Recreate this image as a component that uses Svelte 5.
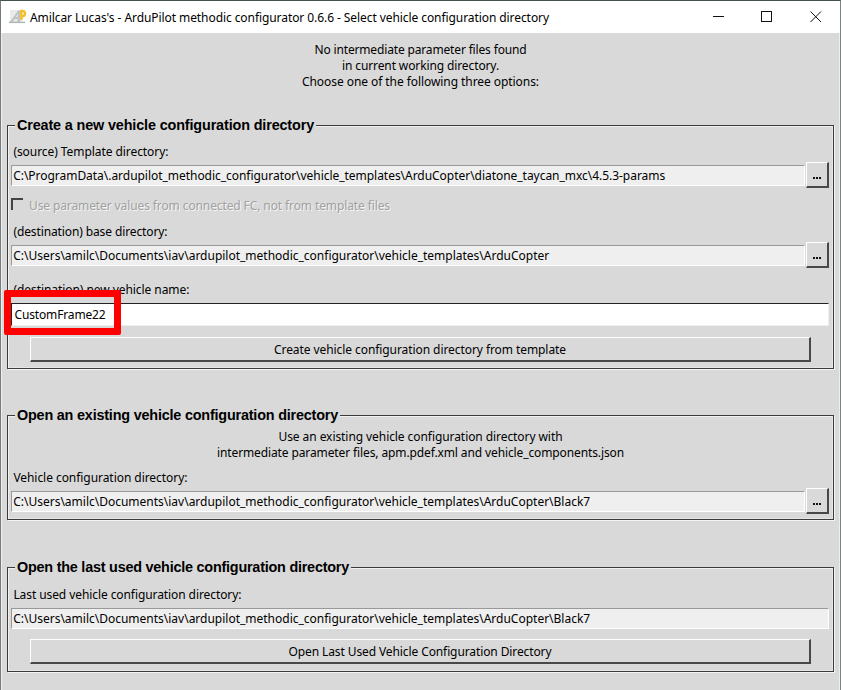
<script>
  const base = 'C:\\Users\\amilc\\Documents\\iav\\ardupilot_methodic_configurator\\vehicle_templates\\ArduCopter';
  const template = 'C:\\ProgramData\\.ardupilot_methodic_configurator\\vehicle_templates\\ArduCopter\\diatone_taycan_mxc\\4.5.3-params';
  let name = $state('CustomFrame22');

  // Spreads the letters of a line so that it takes the given width.
  function fit(node, width) {
    const spacing = (width - node.getBoundingClientRect().width) / node.textContent.length;
    node.style.letterSpacing = `${spacing}px`;
  }
</script>

{#snippet pathRow(value, width)}
  <div class="row">
    <div class="field"><span use:fit={width}>{value}</span></div>
    <button class="browse" aria-label="Browse"><i></i><i></i><i></i></button>
  </div>
{/snippet}

<div class="window">
  <header>
    <svg class="logo" width="18" height="16" viewBox="0 0 18 16">
      <rect x="1" y="1" width="12" height="12" fill="#e9ebeb" />
      <path d="M1 13 L9 1.5 H11 V13 H8.5 V10 H5.5 L3.8 13 Z M7 8 H8.8 V5 Z" fill="#bfc3c4" fill-rule="evenodd" />
      <path d="M0 13.4 H16" stroke="#b0b3b4" stroke-width="1.4" />
      <path d="M12.3 11 V2 H13.5 Q16.2 2 16 4.8 Q15.5 7.8 12.5 7.6" fill="none" stroke="#f5be2b" stroke-width="2.4" />
    </svg>
    <h1><span use:fit={519}>Amilcar Lucas's - ArduPilot methodic configurator 0.6.6 - Select vehicle configuration directory</span></h1>
    <svg class="controls" width="112" height="14" viewBox="0 0 112 14" fill="none" stroke="#111">
      <path d="M1 6.5 H12" />
      <rect x="49.5" y="1.5" width="10" height="10" />
      <path d="M98.5 1.5 L109 12 M109 1.5 L98.5 12" />
    </svg>
  </header>

  <main>
    <p class="intro">
      <span use:fit={212}>No intermediate parameter files found</span><br />
      <span use:fit={157}>in current working directory.</span><br />
      <span use:fit={237}>Choose one of the following three options:</span>
    </p>

    <section class="create">
      <h2><span use:fit={297}>Create a new vehicle configuration directory</span></h2>
      <div class="label"><span use:fit={155}>(source) Template directory:</span></div>
      {@render pathRow(template, 652)}
      <div class="check"><b></b><span use:fit={361}>Use parameter values from connected FC, not from template files</span></div>
      <div class="label"><span use:fit={154}>(destination) base directory:</span></div>
      {@render pathRow(base, 536)}
      <div class="label named"><span use:fit={176}>(destination) new vehicle name:</span></div>
      <div class="entry"><span use:fit={91}>{name}</span><div class="marker"></div></div>
      <button class="wide"><span use:fit={292}>Create vehicle configuration directory from template</span></button>
    </section>

    <section class="existing">
      <h2><span use:fit={321}>Open an existing vehicle configuration directory</span></h2>
      <p>
        <span use:fit={284}>Use an existing vehicle configuration directory with</span><br />
        <span use:fit={407}>intermediate parameter files, apm.pdef.xml and vehicle_components.json</span>
      </p>
      <div class="label"><span use:fit={174}>Vehicle configuration directory:</span></div>
      {@render pathRow(base + '\\Black7', 577)}
    </section>

    <section class="last">
      <h2><span use:fit={332}>Open the last used vehicle configuration directory</span></h2>
      <div class="label"><span use:fit={228}>Last used vehicle configuration directory:</span></div>
      <div class="row"><div class="field"><span use:fit={577}>{base + '\\Black7'}</span></div></div>
      <button class="wide"><span use:fit={263}>Open Last Used Vehicle Configuration Directory</span></button>
    </section>
  </main>
</div>

<style>
  .window {
    box-sizing: border-box;
    width: 841px;
    height: 690px;
    overflow: hidden;
    border-top: 1px solid #43524b;
    border-left: 1px solid #777b79;
    border-right: 1px solid #7d8380;
    background: #d9d9d9;
    color: #000;
    font: 12px/16px "Noto Sans", "Open Sans", sans-serif;
    white-space: nowrap;
  }
  header {
    display: flex;
    align-items: center;
    height: 32px;
    background: #fff;
  }
  .logo { margin: 0 3px 0 8px; }
  h1 { margin: 0; padding-top: 2px; font-size: 12px; font-weight: 400; line-height: 16px; }
  .controls { margin: 0 16px 0 auto; }
  main {
    box-sizing: border-box;
    height: 657px;
    padding: 9px 5px 0;
    border: solid #eee;
    border-width: 0 1px;
  }
  p { margin: 0; text-align: center; }
  section {
    display: flex;
    flex-direction: column;
    box-sizing: border-box;
    width: 827px;
    border: 1px solid #3b3b3b;
    box-shadow: inset 1px 1px #f1f1f1, inset -1px -1px #e6e6e6, 1px 1px #f4f4f4;
    padding: 0 4px 0 3px;
  }
  .create { height: 244px; margin-top: 35px; }
  .existing { height: 105px; margin-top: 46px; }
  .last { height: 105px; margin-top: 47px; }
  h2 {
    align-self: flex-start;
    height: 18px;
    margin: -10px 0 0 4px;
    padding: 0 2px;
    background: #d9d9d9;
    font: 700 14.4px/18px "Liberation Sans", Arial, sans-serif;
  }
  .label { height: 16px; padding-left: 2.4px; }
  .create h2 + .label { margin-top: 10px; }
  .existing p { margin-top: 5px; padding-left: 1px; }
  .existing p + .label { margin-top: 9px; }
  .last h2 + .label { margin-top: 11px; }
  .row {
    display: flex;
    align-items: center;
    gap: 1px;
    height: 26px;
    margin-top: 2px;
  }
  .label.named { margin-top: 14px; }
  .field, .entry {
    box-sizing: border-box;
    flex: 1;
    height: 21px;
    border: 1px solid;
    border-color: #999 #fff #fff #999;
    padding-left: 1.2px;
    background: #efefef;
    line-height: 20px;
  }
  .entry {
    position: relative;
    flex: none;
    height: 23px;
    margin: 5px 0 0;
    border: 1px solid;
    border-color: #222 #eee #eee #222;
    padding-left: 2.5px;
    background: #fff;
    line-height: 21px;
  }
  .marker {
    position: absolute;
    top: -14px;
    left: -8px;
    box-sizing: border-box;
    width: 117px;
    height: 45px;
    border: 7px solid #f00;
    border-radius: 2px;
  }
  button {
    box-sizing: border-box;
    margin: 0;
    border: solid;
    border-width: 1px 2px 2px 1px;
    border-color: #fff #484848 #484848 #fff;
    padding: 0;
    background: #d9d9d9;
    color: #000;
    font: inherit;
  }
  .browse {
    display: flex;
    align-items: flex-end;
    justify-content: center;
    gap: 1px;
    width: 23px;
    height: 26px;
    padding-bottom: 7px;
  }
  .browse i { width: 2px; height: 2px; background: #111; }
  .wide { width: 781px; height: 25px; margin: 11px 0 0 19px; padding-top: 2px; }
  .last .wide { margin-top: 8px; }
  .check {
    display: flex;
    height: 16px;
    margin: 10px 0 10px;
    color: #a1a1a1;
    text-shadow: 1px 1px #f5f5f5;
  }
  .check b {
    width: 10px;
    height: 10px;
    margin: 0 6px 0 0;
    border: solid #444;
    border-width: 2px 0 0 2px;
  }
</style>
